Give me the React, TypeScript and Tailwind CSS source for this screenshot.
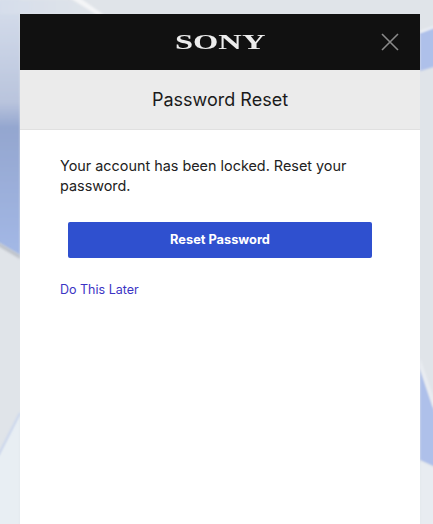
import React from 'react'

// blurred wallpaper behind the dialog
const Wallpaper = () => (
  <svg className="absolute inset-0 h-full w-full" viewBox="0 0 433 524" preserveAspectRatio="none">
    <defs>
      <linearGradient id="leftBlue" x1="0" y1="0" x2="0" y2="1">
        <stop offset="0" stopColor="#d6deeb" />
        <stop offset="0.4" stopColor="#b9c4dd" />
        <stop offset="0.5" stopColor="#94a6cf" />
        <stop offset="1" stopColor="#a3b8e6" />
      </linearGradient>
      <linearGradient id="topFade" x1="0" y1="0" x2="1" y2="0">
        <stop offset="0" stopColor="#d6deeb" />
        <stop offset="1" stopColor="#e0e4e9" />
      </linearGradient>
      <filter id="soft">
        <feGaussianBlur stdDeviation="1" />
      </filter>
    </defs>
    <rect width="433" height="524" fill="#e0e4e9" />
    <path d="M-4 0H20V255L-4 241Z" fill="url(#leftBlue)" filter="url(#soft)" />
    <path d="M0 0H72L100 14H0Z" fill="url(#topFade)" filter="url(#soft)" />
    <path d="M70 -2L80 -2L104 15H97Z" fill="#f4f5f7" filter="url(#soft)" />
    <path d="M-4 241L20 255V259L-4 245Z" fill="#a9aeb8" opacity="0.6" filter="url(#soft)" />
    <path d="M420 33L437 26V66L420 71Z" fill="#aec0ea" filter="url(#soft)" />
    <path d="M420 31L437 25V27L420 33Z" fill="#f2f4f8" filter="url(#soft)" />
    <path d="M420 368L433 407L437 420V468L420 460Z" fill="#aec0ea" filter="url(#soft)" />
    <path d="M420 358L437 408L433 407L420 368Z" fill="#eaedf2" filter="url(#soft)" />
    <path d="M420 461L437 469V530H420Z" fill="#e8ecf1" filter="url(#soft)" />
    <path d="M-4 460L20 412V530H-4Z" fill="#e8eef3" filter="url(#soft)" />
    <path d="M-2 456L20 413" stroke="#bccaea" strokeWidth="1.5" fill="none" filter="url(#soft)" />
  </svg>
)

const App: React.FC = () => {
  return (
    <div className="relative h-[524px] w-[433px] overflow-hidden font-['Inter',sans-serif]">
      <Wallpaper />

      <div className="relative mx-5 mt-[14px] h-[510px] w-[400px] bg-white">
        {/* HEADER */}
        <div className="relative flex h-14 items-center justify-center bg-[#111111]">
          <span className="scale-x-[1.55] font-['Liberation_Serif',serif] text-[21px] leading-none font-bold text-[#ececec]">
            SONY
          </span>
          <button className="absolute top-[19px] right-[21px] text-[#8a8a8a]">
            <svg width="18" height="18" viewBox="0 0 18 18" fill="none" stroke="currentColor" strokeWidth="1.6" className="block">
              <path d="M1 1L17 17M17 1L1 17" />
            </svg>
          </button>
        </div>

        {/* TITLE */}
        <div className="flex h-[60px] items-center justify-center border-b border-[#e0e0e0] bg-[#ebebeb]">
          <h1 className="text-[18px] leading-none text-[#1a1a1a]">Password Reset</h1>
        </div>

        {/* BODY */}
        <div className="px-10 pt-[26px]">
          <p className="text-[14.4px] leading-[20px] text-[#222222]">
            Your account has been locked. Reset your password.
          </p>
          <button className="mx-2 mt-[26px] block h-9 w-[304px] rounded-[2px] bg-[#2f50cf] text-[12.8px] font-bold text-white">
            Reset Password
          </button>
          <a href="#" className="mt-[24px] block text-[12.5px] leading-[15px] text-[#3b34c4]">
            Do This Later
          </a>
        </div>
      </div>
    </div>
  )
}

export default App
